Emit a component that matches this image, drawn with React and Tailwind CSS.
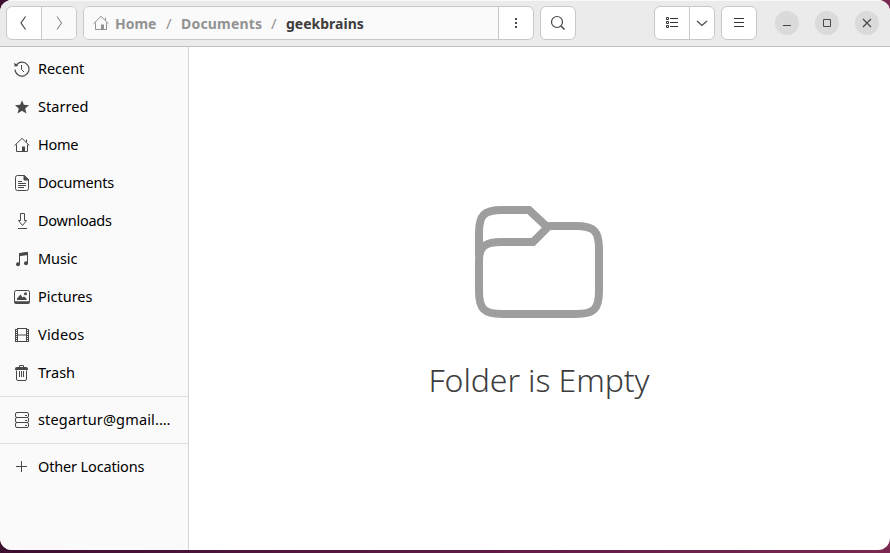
import React from "react";

function Icon({ children, className = "" }) {
  return (
    <svg
      viewBox="0 0 16 16"
      className={`h-4 w-4 shrink-0 text-[#484848] ${className}`}
      fill="none"
      stroke="currentColor"
      strokeWidth="1"
    >
      {children}
    </svg>
  );
}

const HomeShape = () => (
  <>
    <path d="M.5 8.7 8 1.3l7.5 7.4M12.5 2.5V5M2.5 7.5v7h11v-7" />
    <path d="M8 9.5h3V15H8z" fill="currentColor" stroke="none" />
  </>
);

const icons = {
  Recent: (
    <>
      <path d="M2.2 4.2A7 7 0 1 1 1 8.5" strokeWidth="1.1" />
      <path d="M.2 1.800.6 5.600l4-.6z" fill="currentColor" stroke="none" />
      <path d="M7.5 4v4.5L10 11" />
    </>
  ),
  Starred: (
    <path
      d="M8 1.2 9.9 5.8 15 6.2l-3.8 3.3 1.2 4.9L8 11.8l-4.4 2.6 1.2-4.9L1 6.2l5.1-.4z"
      fill="currentColor"
      stroke="none"
    />
  ),
  Home: <HomeShape />,
  Documents: (
    <>
      <path d="M10.5.5h-7a2 2 0 0 0-2 2v11a2 2 0 0 0 2 2h9a2 2 0 0 0 2-2v-9z" />
      <path d="M10 .5V5h4.5z" fill="currentColor" />
      <path d="M4 6.5h4M4 8.5h8M4 10.5h8M4 12.5h6" />
    </>
  ),
  Downloads: <path d="M6.5.5h4v7h2l-4 5-4-5h2zM4 15.5h9" />,
  Music: (
    <>
      <path d="M5.5 13V2.5l8-1V12" />
      <path d="M5 2.2 14 1v3L5 5.2z" fill="currentColor" stroke="none" />
      <circle cx="4" cy="13.2" r="2" fill="currentColor" stroke="none" />
      <circle cx="12" cy="12.2" r="2" fill="currentColor" stroke="none" />
    </>
  ),
  Pictures: (
    <>
      <rect x=".5" y="1.5" width="15" height="12" rx="1.7" />
      <path d="M0 12.2h16v.8q0 2-2 2H2q-2 0-2-2z" fill="currentColor" stroke="none" />
      <path d="M3 11V9.500L6.500 5.500l2 3L10 7.500l2.500 2V11z" fill="currentColor" stroke="none" />
      <circle cx="11.500" cy="4.700" r="1.500" fill="currentColor" stroke="none" />
    </>
  ),
  Videos: (
    <>
      <path d="M3.500 1v14M12.500 1v14M3 1.500h10M3 8h10M3 14.500h10" />
      <path d="M1.500 2v12M14.500 2v12" />
      <path d="M2.500 2v13M13.500 2v13" strokeWidth="3" strokeDasharray="1 1" />
    </>
  ),
  Trash: (
    <>
      <path d="M2.500 5.500v8.500q0 1.500 1.500 1.500h7q1.500 0 1.500-1.500V5.500M5.500 6v6M7.500 6v6M9.500 6v6" />
      <path d="M5.500 2.500v-2h4v2" />
      <path d="M1 5V4q0-2 2-2h9q2 0 2 2v1z" fill="currentColor" stroke="none" />
    </>
  ),
  Account: (
    <>
      <rect x="1.500" y=".5" width="13" height="5" rx="1.500" />
      <rect x="1.500" y="5.500" width="13" height="5" rx="1.500" />
      <rect x="1.500" y="10.500" width="13" height="5" rx="1.500" />
      <path d="M11 3.500h2M11 8.500h2M11 13.500h2" />
    </>
  ),
  Other: <path d="M2 7.500h11M7.500 2v11" />,
};

const places = [
  ["Recent", "tracking-[-0.05px]"],
  ["Starred", "tracking-[0.05px]"],
  ["Home", "tracking-[-0.25px]"],
  ["Documents", "tracking-[-0.25px]"],
  ["Downloads", "tracking-[-0.25px]"],
  ["Music", "tracking-[-0.1px]"],
  ["Pictures", ""],
  ["Videos", "tracking-[0.2px]"],
  ["Trash", ""],
];

function Place({ icon, label, tracking = "" }) {
  return (
    <div className="flex h-[38px] items-center gap-2 pl-[14px] text-[14.5px] text-black">
      <Icon>{icons[icon]}</Icon>
      <span className={`whitespace-nowrap ${tracking}`}>{label}</span>
    </div>
  );
}

function WindowButton({ children }) {
  return (
    <div className="flex h-6 w-6 items-center justify-center rounded-full bg-[#dadada]">
      <Icon className="text-[#2e2e2e]">{children}</Icon>
    </div>
  );
}

const box = "flex h-[34px] overflow-hidden rounded-md border border-[#c8c8c8] bg-white";
const cell = "flex items-center justify-center";

export default function App() {
  return (
    <div className="h-[553px] w-[890px] overflow-hidden bg-gradient-to-r from-[#3c0f2f] via-[#5c1a45] to-[#7a2850] font-['Noto_Sans',sans-serif]">
      <div className="flex h-[550px] flex-col overflow-hidden rounded-xl bg-white">
        <header className="flex h-[47px] shrink-0 items-start border-t border-b border-t-[#f9f9f9] border-b-[#bfbfbf] bg-[#ebebeb] pt-[5px] pl-[6px]">
          <div className={`${box} w-[71px]`}>
            <div className={`${cell} w-[35px] border-r border-[#c8c8c8]`}>
              <Icon><path d="M9.500 1.500 5 8l4.500 6.500" strokeWidth="1.200" /></Icon>
            </div>
            <div className={`${cell} flex-1 bg-[#fafafa]`}>
              <Icon className="text-[#929292]!"><path d="M6 1.500 10.500 8 6 14.500" strokeWidth="1.200" /></Icon>
            </div>
          </div>
          <div className={`${box} ml-[6px] w-[451px]`}>
            <div className="flex flex-1 items-center bg-[#fafafa] pl-[9px] text-[14px] font-bold text-[#929292]">
              <Icon className="text-[#929292]!"><HomeShape /></Icon>
              <span className="ml-[6px] w-[42px]">Home</span>
              <span className="ml-[9px] w-[15px] text-[15px] font-normal">/</span>
              <span className="w-[81px] tracking-[0.2px]">Documents</span>
              <span className="ml-[9px] w-[15px] text-[15px] font-normal">/</span>
              <span className="text-[#3d3d3d]">geekbrains</span>
            </div>
            <div className={`${cell} w-[35px] border-l border-[#c8c8c8]`}>
              <Icon><path d="M7 3h2v2H7zM7 7h2v2H7zM7 11h2v2H7z" fill="currentColor" stroke="none" /></Icon>
            </div>
          </div>
          <div className={`${box} ${cell} ml-[6px] w-[36px]`}>
            <Icon><circle cx="7" cy="7" r="5.500" strokeWidth="1.200" /><path d="m11 11 3.500 3.500" strokeWidth="1.600" /></Icon>
          </div>
          <div className={`${box} ml-[78px] w-[61px]`}>
            <div className={`${cell} w-[35px] border-r border-[#c8c8c8]`}>
              <Icon className="text-[#333]!">
                <path d="M2.500 2.500h2v2h-2zM2.500 6.500h2v2h-2zM2.500 10.500h2v2h-2zM6 3.500h8M6 7.500h8M6 11.500h8" />
              </Icon>
            </div>
            <div className={`${cell} flex-1`}>
              <Icon><path d="m3 6 5 4.500L13 6" strokeWidth="1.200" /></Icon>
            </div>
          </div>
          <div className={`${box} ${cell} ml-[6px] w-[36px]`}>
            <Icon className="text-[#333]!"><path d="M3 3.500h10M3 7.500h10M3 11.500h10" /></Icon>
          </div>
          <div className="mt-[5px] ml-[18px] flex gap-4">
            <WindowButton><path d="M4 10.500h8" /></WindowButton>
            <WindowButton><path d="M4.500 4.500h7v7h-7z" /></WindowButton>
            <WindowButton><path d="m4 4 8 8M12 4l-8 8" strokeWidth="1.200" /></WindowButton>
          </div>
        </header>
        <div className="flex min-h-0 flex-1">
          <aside className="w-[189px] shrink-0 border-r border-[#d5d5d5] bg-[#fafafa] pt-[3px]">
            {places.map(([name, tracking]) => (
              <Place key={name} icon={name} label={name} tracking={tracking} />
            ))}
            <div className="my-1 h-px bg-[#dedede]" />
            <Place icon="Account" label="stegartur@gmail.…" tracking="tracking-[0.15px]" />
            <div className="my-1 h-px bg-[#dedede]" />
            <Place icon="Other" label="Other Locations" tracking="tracking-[-0.15px]" />
          </aside>
          <main className="flex flex-1 flex-col items-center pt-[159px] pr-px">
            <svg width="128" height="112" viewBox="0 0 128 112" fill="none" stroke="#9e9e9e" strokeWidth="8">
              <path d="M4 50V27C4 9 9 4 27 4H54L71 20H101C119 20 124 25 124 43V85C124 103 119 108 101 108H27C9 108 4 103 4 85V55C4 41 9 36 27 36H58L74 20" />
              <path d="M4 42V28" />
            </svg>
            <h1 className="mt-[40px] text-[32px] leading-[44px] font-light tracking-[-0.1px] whitespace-nowrap text-[#3d3d3d]">Folder is Empty</h1>
          </main>
        </div>
      </div>
    </div>
  );
}
